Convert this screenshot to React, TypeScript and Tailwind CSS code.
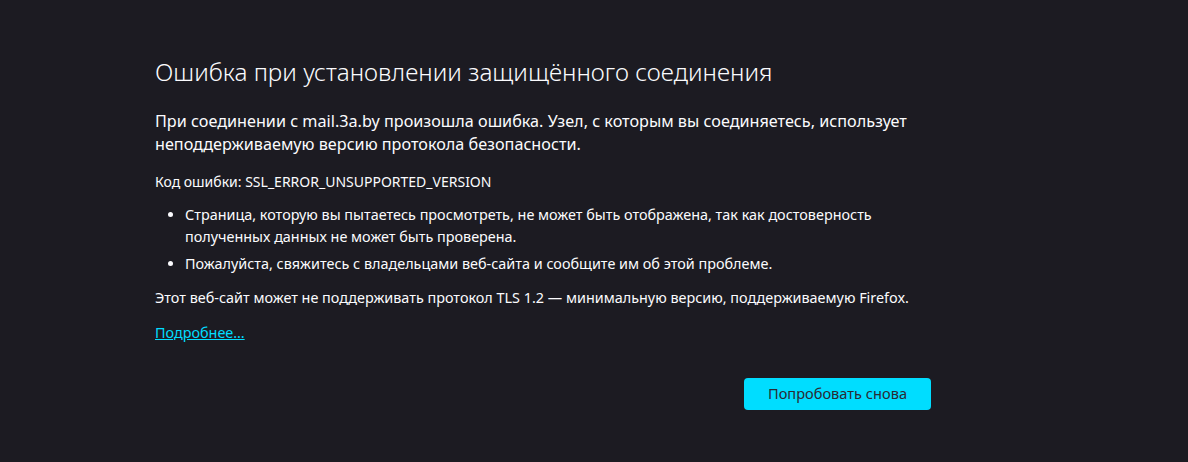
export default function App() {
  return (
    <div
      className="min-h-[462px] w-full bg-[#1c1b22] text-[#fbfbfe]"
      style={{ fontFamily: '"Noto Sans", "Open Sans", sans-serif' }}
    >
      <div className="ml-[155px] w-[776px] pt-[52px]">
        <h1 className="text-[24.3px] font-light leading-[40px] text-[#fbfbfe]">
          Ошибка при установлении защищённого соединения
        </h1>

        <p className="mt-[18px] text-[16.2px] font-normal leading-[23px]">
          При соединении с mail.3a.by произошла ошибка. Узел, с которым вы соединяетесь, использует
          неподдерживаемую версию протокола безопасности.
        </p>

        <p className="mt-[16px] text-[14px] leading-[20px]">
          Код ошибки: SSL_ERROR_UNSUPPORTED_VERSION
        </p>

        <ul className="mt-[12px] flex flex-col gap-[5px] pl-[30px] text-[14.4px] leading-[22px]">
          <li className="list-disc">
            Страница, которую вы пытаетесь просмотреть, не может быть отображена, так как достоверность
            полученных данных не может быть проверена.
          </li>
          <li className="list-disc">
            Пожалуйста, свяжитесь с владельцами веб-сайта и сообщите им об этой проблеме.
          </li>
        </ul>

        <p className="mt-[12px] text-[14.4px] leading-[22px]">
          Этот веб-сайт может не поддерживать протокол TLS 1.2 — минимальную версию, поддерживаемую Firefox.
        </p>

        <a href="#" className="mt-[13px] block w-fit text-[14.4px] leading-[22px] text-[#00ddff] underline">
          Подробнее…
        </a>

        <div className="mt-[34px] flex justify-end">
          <button className="h-[32px] w-[187px] rounded-[4px] bg-[#00ddff] text-[14.6px] text-[#2b2a33]">
            Попробовать снова
          </button>
        </div>
      </div>
    </div>
  );
}
